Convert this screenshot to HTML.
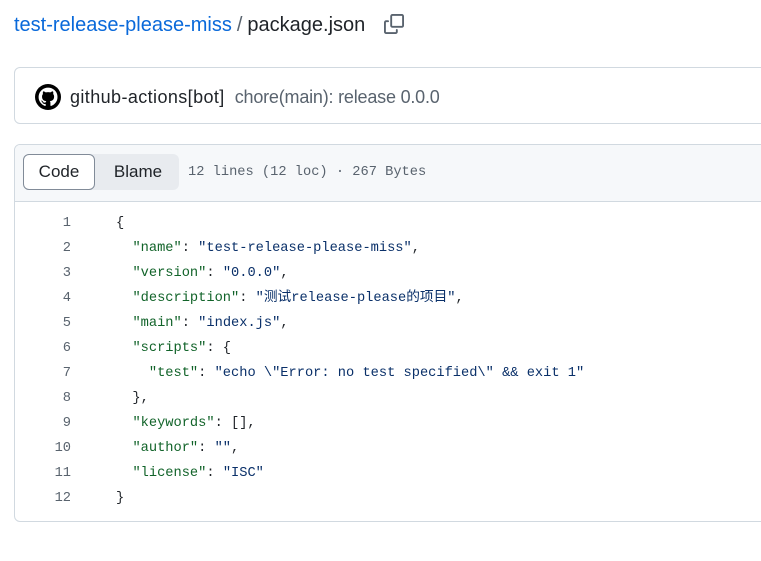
<!DOCTYPE html>
<html><head><meta charset="utf-8"><style>
body{margin:0;background:#fff;width:761px;height:561px;overflow:hidden;font-family:"Liberation Sans","Noto Sans CJK SC",sans-serif;color:#1f2328}
.t{position:absolute;left:14px;top:12px;font-size:20px;line-height:26px;white-space:nowrap}
.t a{color:#0969da;text-decoration:none}
.t .s{color:#59636e;margin:0 5px}
.copy{position:absolute;left:384px;top:14px}
.commit{position:absolute;left:14px;top:67px;width:760px;height:57px;border:1px solid #d1d9e0;border-radius:6px;box-sizing:border-box}
.av{position:absolute;left:20px;top:16px;width:26px;height:26px}
.cn{position:absolute;left:55px;top:18px;font-size:18px;line-height:22px;white-space:nowrap}
.cn b{font-weight:normal;color:#1f2328;letter-spacing:0.4px}
.cn span{color:#59636e;margin-left:10px;letter-spacing:-0.2px}
.box{position:absolute;left:14px;top:144px;width:760px;height:378px;border:1px solid #d1d9e0;border-radius:6px;box-sizing:border-box;overflow:hidden}
.hd{height:56px;background:#f6f8fa;border-bottom:1px solid #d1d9e0;position:relative}
.seg{position:absolute;left:8px;top:9px;width:156px;height:36px;background:#e8ebef;border-radius:6px}
.code{position:absolute;left:0;top:0;width:72px;height:36px;background:#fff;border:1px solid #818b98;border-radius:6px;box-sizing:border-box;text-align:center;line-height:34px;font-size:17px}
.bl{position:absolute;left:72px;top:0;width:86px;text-align:center;line-height:36px;font-size:17px}
.meta{position:absolute;left:173px;top:20px;font-family:"Liberation Mono",monospace;font-size:13.7px;color:#59636e;white-space:pre}
.ln{position:absolute;left:0;top:66px;width:56px;text-align:right;font-family:"Liberation Mono",monospace;font-size:13.7px;line-height:25px;color:#59636e}
.src{position:absolute;left:101px;top:66px;font-family:"Liberation Mono","Noto Sans CJK SC",monospace;font-size:13.7px;line-height:25px;white-space:pre;color:#1f2328}
.k{color:#116329}.v{color:#0a3069}
</style></head><body>
<div class="t"><a>test-release-please-miss</a><span class="s">/</span>package.json</div>
<svg class="copy" width="20" height="20" viewBox="0 0 16 16" fill="#59636e"><path d="M0 6.75C0 5.784.784 5 1.75 5h1.5a.75.75 0 0 1 0 1.5h-1.5a.25.25 0 0 0-.25.25v7.5c0 .138.112.25.25.25h7.5a.25.25 0 0 0 .25-.25v-1.5a.75.75 0 0 1 1.5 0v1.5A1.75 1.75 0 0 1 9.25 16h-7.5A1.75 1.75 0 0 1 0 14.25Z"/><path d="M5 1.75C5 .784 5.784 0 6.75 0h7.5C15.216 0 16 .784 16 1.750v7.5A1.75 1.75 0 0 1 14.25 11h-7.5A1.75 1.75 0 0 1 5 9.25Zm1.75-.25a.25.25 0 0 0-.25.25v7.5c0 .138.112.25.25.25h7.5a.25.25 0 0 0 .25-.25v-7.5a.25.25 0 0 0-.25-.25Z"/></svg>
<div class="commit">
<svg class="av" viewBox="0 0 16 16"><circle cx="8" cy="8" r="8" fill="#000"/><path fill="#fff" d="M8 2.2a5.8 5.8 0 0 0-1.83 11.3c.29.05.4-.13.4-.28v-1c-1.6.35-1.95-.77-1.95-.77-.27-.67-.65-.85-.65-.85-.53-.36.04-.35.04-.35.58.04.89.6.89.6.52.89 1.36.63 1.7.48.05-.38.2-.63.37-.78-1.29-.15-2.64-.64-2.64-2.86 0-.63.23-1.15.6-1.56-.06-.15-.26-.74.06-1.54 0 0 .49-.16 1.6.6a5.5 5.5 0 0 1 2.9 0c1.1-.76 1.6-.6 1.6-.6.32.8.12 1.39.06 1.54.37.4.6.93.6 1.56 0 2.23-1.36 2.71-2.65 2.86.21.18.39.53.39 1.07v1.6c0 .15.1.33.4.28A5.8 5.8 0 0 0 8 2.2Z"/></svg>
<div class="cn"><b>github-actions[bot]</b><span>chore(main): release 0.0.0</span></div>
</div>
<div class="box">
<div class="hd"><div class="seg"><div class="code">Code</div><div class="bl">Blame</div></div>
<div class="meta">12 lines (12 loc) · 267 Bytes</div></div>
<div class="ln">1<br>2<br>3<br>4<br>5<br>6<br>7<br>8<br>9<br>10<br>11<br>12</div>
<div class="src">{
  <span class="k">"name"</span>: <span class="v">"test-release-please-miss"</span>,
  <span class="k">"version"</span>: <span class="v">"0.0.0"</span>,
  <span class="k">"description"</span>: <span class="v">"测试release-please的项目"</span>,
  <span class="k">"main"</span>: <span class="v">"index.js"</span>,
  <span class="k">"scripts"</span>: {
    <span class="k">"test"</span>: <span class="v">"echo \"Error: no test specified\" &amp;&amp; exit 1"</span>
  },
  <span class="k">"keywords"</span>: [],
  <span class="k">"author"</span>: <span class="v">""</span>,
  <span class="k">"license"</span>: <span class="v">"ISC"</span>
}</div>
</div>
</body></html>
